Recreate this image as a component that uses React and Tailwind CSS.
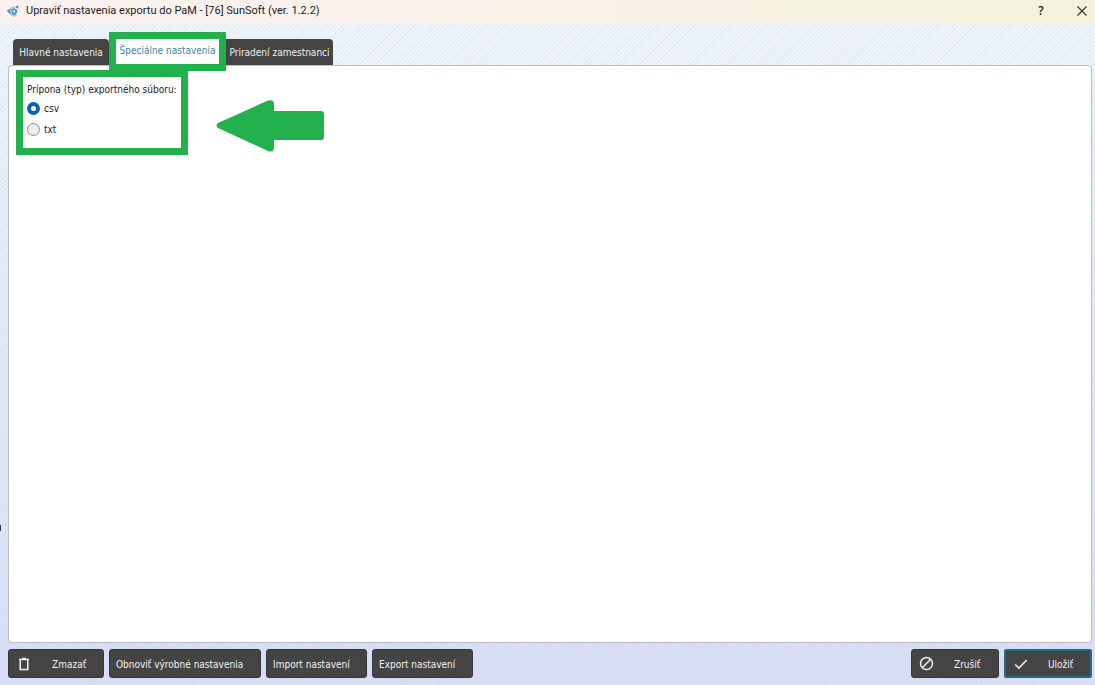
import { useState } from 'react'

const buttonBase =
  'flex h-[29px] items-center rounded-[3px] border border-[#353543] bg-[#444444] pt-[2px] text-[#f2f2f2] hover:bg-[#525252]'

function TrashIcon() {
  return (
    <svg className="mb-[2px]" width="12" height="14" viewBox="0 0 12 14" fill="none" stroke="#f2f2f2" strokeWidth="1.5" aria-hidden="true">
      <path d="M1 2.5h10M4 1.4h4M2.2 2.5v10h7.600v-10" />
    </svg>
  )
}

function ForbidIcon() {
  return (
    <svg className="mb-[2px]" width="15" height="15" viewBox="0 0 15 15" fill="none" stroke="#f2f2f2" strokeWidth="1.5" aria-hidden="true">
      <circle cx="7.5" cy="7.5" r="6" />
      <path d="M11.7 3.3L3.3 11.7" />
    </svg>
  )
}

function CheckIcon() {
  return (
    <svg className="mb-[2px]" width="14" height="12" viewBox="0 0 14 12" fill="none" stroke="#f2f2f2" strokeWidth="1.5" aria-hidden="true">
      <path d="M1.2 6.5l3.6 3.6L12.8 2" />
    </svg>
  )
}

function AppLogo() {
  return (
    <svg width="13" height="12" viewBox="0 0 13 12" aria-hidden="true">
      <path d="M0.500 5.500L5 3.200 4.200 6l1.500 3.200L3 8.200z" fill="#4a9cc4" />
      <path d="M4.500 2.500L8 1.500l1.500 1.500-4 1z" fill="#8dc5dc" />
      <path d="M5 4.200l3-1 3 1.400.3 3L8.500 10.800 5.500 9z" fill="#4b9ec2" />
      <path d="M6.300 5.200l2.400-.4.8 2-1.500 1.400-1.800-1z" fill="#a9d3e4" />
      <path d="M9.300 1.500l3-.8-.5 3.200z" fill="#3f7f9c" />
      <path d="M4.500 9.500l3 1.800 3-.8" stroke="#8fb6c8" fill="none" />
    </svg>
  )
}

function Tab({ selected, className, children, onClick }) {
  return (
    <button
      type="button"
      role="tab"
      aria-selected={selected}
      onClick={onClick}
      className={`whitespace-nowrap ${selected ? 'bg-white text-[#3a87a3]' : 'bg-[#444444] text-[#f2f2f2]'} ${className}`}
    >
      {children}
    </button>
  )
}

export default function App() {
  const [tab, setTab] = useState(1)
  const [type, setType] = useState('csv')

  return (
    <div className="flex min-h-screen flex-col bg-linear-to-b from-[#eff5f8] to-[#dadef6] font-['DejaVu_Sans_Condensed','Noto_Sans',sans-serif] text-[10px] leading-4 text-[#1c1c1c]">
      <header className="flex h-6 shrink-0 items-center bg-linear-to-r from-[#fcf1ef] via-[#f9f2e7] to-[#f4f2dc] pr-[3px] pb-[3px] pl-[6px]">
        <AppLogo />
        <h1 className="ml-[7px] font-[Roboto,'Noto_Sans',sans-serif] text-[11px] font-normal">
          Upraviť nastavenia exportu do PaM - [76] SunSoft (ver. 1.2.2)
        </h1>
        <button type="button" aria-label="Pomocník" className="ml-auto w-5 text-center font-['Open_Sans',sans-serif] text-xs font-semibold">
          ?
        </button>
        <button type="button" aria-label="Zavrieť" className="ml-[21px] flex w-5 justify-center">
          <svg width="10" height="10" viewBox="0 0 10 10" fill="none" stroke="#333" strokeWidth="1.1" aria-hidden="true">
            <path d="M.5.5l9 9M9.5.5l-9 9" />
          </svg>
        </button>
      </header>

      <div className="relative flex flex-1 flex-col bg-[repeating-linear-gradient(135deg,#b9d3e340_0px,#b9d3e340_1px,transparent_1px,transparent_3px)] pr-[3px] pl-2">
        <span className="absolute top-[501px] left-0 h-[6px] w-px bg-[#333344]" />
        <div role="tablist" className="flex h-[41px] items-end pl-[5px]">
          <Tab selected={tab === 0} onClick={() => setTab(0)} className="h-[26px] w-24 rounded-t-[4px] pt-[2px]">
            Hlavné nastavenia
          </Tab>
          <div className="relative h-[33px] w-[117px]">
            <Tab selected={tab === 1} onClick={() => setTab(1)} className="h-full w-full pt-1">
              Špeciálne nastavenia
            </Tab>
            <div className="pointer-events-none absolute inset-x-0 top-0 -bottom-[6px] z-10 border-7 border-[#22b14c]" />
          </div>
          <Tab selected={tab === 2} onClick={() => setTab(2)} className="h-[26px] w-[107px] rounded-tr-[4px] pt-[2px]">
            Priradení zamestnanci
          </Tab>
        </div>

        <main role="tabpanel" className="flex flex-1 items-start rounded-[4px] border border-[#b9bcc6] bg-white pt-1 pl-[7px]">
          <div role="radiogroup" aria-labelledby="type-label" className="h-[85px] w-[172px] border-7 border-[#22b14c] pt-[5px] pl-1">
            <p id="type-label" className="whitespace-nowrap">Prípona (typ) exportného súboru:</p>
            {['csv', 'txt'].map((value) => (
              <label key={value} className="flex h-[21px] w-fit items-center gap-1">
                <input
                  type="radio"
                  name="type"
                  value={value}
                  checked={type === value}
                  onChange={() => setType(value)}
                  className="size-[13px] appearance-none rounded-full border border-[#8b8b8b] bg-[#eeeeee] checked:border-4 checked:border-[#0b62b4] checked:bg-white"
                />
                {value}
              </label>
            ))}
          </div>
          <svg className="mt-[29px] ml-7" width="108" height="53" viewBox="0 0 108 53" fill="#22b14c" aria-hidden="true">
            <path d="M2 24L52 1.5Q58 0 58 5V12H105Q108 12 108 15V38Q108 41 105 41H58V48Q58 54 52 52L2 29Q-1 26.500 2 24Z" />
          </svg>
        </main>

        <footer className="flex shrink-0 items-center gap-[5px] pt-[6px] pb-[7px]">
          <button type="button" className={`${buttonBase} w-24 pl-[9px]`}>
            <TrashIcon />
            <span className="ml-[22px]">Zmazať</span>
          </button>
          <button type="button" className={`${buttonBase} w-[152px] pl-[6px]`}>Obnoviť výrobné nastavenia</button>
          <button type="button" className={`${buttonBase} w-[101px] pl-[6px]`}>Import nastavení</button>
          <button type="button" className={`${buttonBase} w-[101px] pl-[6px]`}>Export nastavení</button>
          <button type="button" className={`${buttonBase} ml-auto w-[88px] pl-[7px]`}>
            <ForbidIcon />
            <span className="ml-5">Zrušiť</span>
          </button>
          <button type="button" className="flex h-[29px] w-[88px] items-center rounded-[2px] border-2 border-[#246c82] bg-[#444444] pt-[2px] pl-2 text-[#f2f2f2] hover:bg-[#525252]">
            <CheckIcon />
            <span className="ml-5">Uložiť</span>
          </button>
        </footer>
      </div>
    </div>
  )
}
